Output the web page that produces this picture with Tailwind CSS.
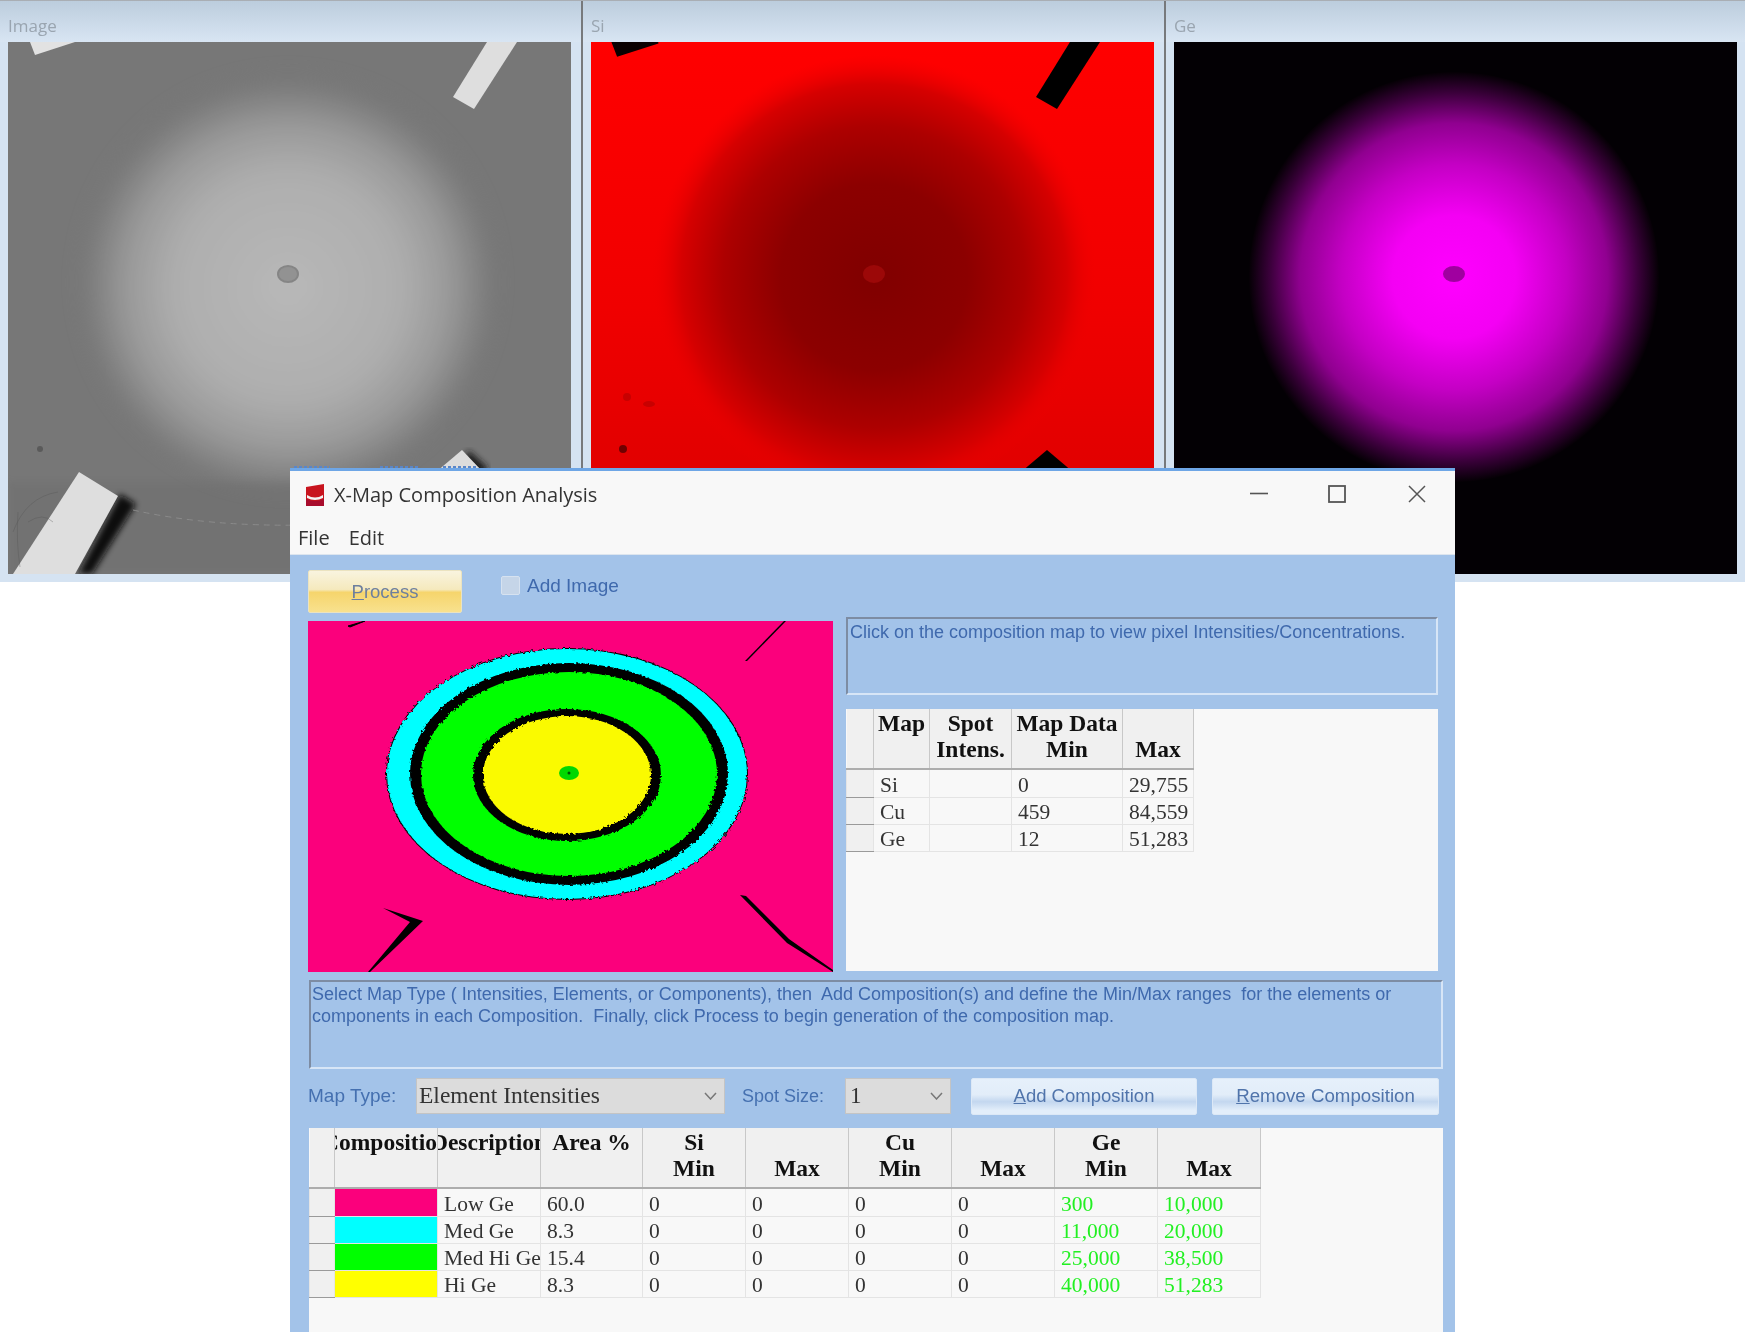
<!DOCTYPE html>
<html lang="en">
<head>
  <meta charset="UTF-8" />
  <title>X-Map Composition Analysis</title>
  <script src="https://cdn.jsdelivr.net/npm/@tailwindcss/browser@4"></script>
</head>
<body class="bg-white overflow-hidden">
  <div class="relative w-[1745px] h-[1332px] overflow-hidden blur-[0.6px]">

    <!-- Image panels behind the dialog -->
    <div class="flex w-[1749px] h-[582px] bg-[#d5e3f2] border-t border-[#a9aeb4]">
      <div class="w-[583px] shrink-0 border-r-2 border-[#77797c] flex flex-col">
        <div class="h-[41px] px-2 pt-[13px] bg-[linear-gradient(#bccddd,#d8e5f3)] text-[17px] leading-6 text-[#9aa5b0] font-['Open_Sans',sans-serif]">Image</div>
        <svg class="ml-2 block" width="563" height="532" viewBox="0 0 563 532">
          <defs>
            <radialGradient id="semBall" gradientUnits="userSpaceOnUse" cx="280" cy="245" r="205">
              <stop offset="0" stop-color="#b8b8b8"/>
              <stop offset="0.55" stop-color="#aeaeae"/>
              <stop offset="0.78" stop-color="#9a9a9a"/>
              <stop offset="0.92" stop-color="#848484"/>
              <stop offset="1" stop-color="#777777"/>
            </radialGradient>
            <filter id="semBlur"><feGaussianBlur stdDeviation="3"/></filter>
            <filter id="semSoft" x="-20%" y="-20%" width="140%" height="140%"><feGaussianBlur stdDeviation="10"/></filter>
          </defs>
          <rect width="563" height="532" fill="#777777"/>
          <circle cx="280" cy="240" r="205" fill="url(#semBall)" filter="url(#semSoft)"/>
          <rect y="440" width="563" height="92" fill="#6a6a6a" opacity="0.35" filter="url(#semBlur)"/>
          <polygon points="112,452 128,462 84,532 70,532" fill="#101010" filter="url(#semBlur)"/>
          <polygon points="460,408 480,426 472,436 455,426" fill="#1a1a1a" filter="url(#semBlur)"/>
          <polygon points="22,0 27,13 67,0" fill="#e2e2e2"/>
          <polygon points="479,0 445,55 466,67 509,0" fill="#dedede"/>
          <polygon points="71,430 110,454 67,532 5,532" fill="#dedede"/>
          <polygon points="454,408 428,430 475,430" fill="#dcdcdc"/>
          <ellipse cx="280" cy="232" rx="10" ry="8" fill="#929292" stroke="#858585" stroke-width="2"/>
          <path d="M125 468 Q200 485 300 483" fill="none" stroke="#8a8a8a" stroke-width="1" stroke-dasharray="6 5"/>
          <path d="M5 490 Q18 455 50 450 M10 470 Q8 500 12 525 M20 480 Q35 470 45 480" fill="none" stroke="#525252" stroke-width="1" opacity="0.35"/>
          <circle cx="32" cy="407" r="3" fill="#5a5a5a"/>
          <path d="M286 425 H322 M372 425 H410 M435 425 H470" stroke="#5a86c8" stroke-width="2" stroke-dasharray="3 2"/>
        </svg>
      </div>

      <div class="w-[583px] shrink-0 border-r-2 border-[#77797c] flex flex-col">
        <div class="h-[41px] px-2 pt-[13px] bg-[linear-gradient(#bccddd,#d8e5f3)] text-[17px] leading-6 text-[#9aa5b0] font-['Open_Sans',sans-serif]">Si</div>
        <svg class="ml-2 block" width="563" height="532" viewBox="0 0 563 532">
          <defs>
            <radialGradient id="siBall" gradientUnits="userSpaceOnUse" cx="283" cy="235" r="222">
              <stop offset="0" stop-color="#800000"/>
              <stop offset="0.42" stop-color="#8c0000"/>
              <stop offset="0.68" stop-color="#ad0000"/>
              <stop offset="0.87" stop-color="#d60000"/>
              <stop offset="1" stop-color="#ee0000" stop-opacity="0"/>
            </radialGradient>
            <linearGradient id="siFade" x1="0" y1="0" x2="0" y2="1">
              <stop offset="0" stop-color="#ff0000"/>
              <stop offset="0.5" stop-color="#f00000"/>
              <stop offset="1" stop-color="#d80000"/>
            </linearGradient>
          </defs>
          <rect width="563" height="532" fill="url(#siFade)"/>
          <circle cx="283" cy="235" r="222" fill="url(#siBall)"/>
          <polygon points="22,0 27,13 67,0" fill="#0a0000" stroke="#0a0000" stroke-width="3"/>
          <polygon points="479,0 445,55 466,67 509,0" fill="#000000"/>
          <polygon points="456,408 430,430 482,430" fill="#000000"/>
          <ellipse cx="283" cy="232" rx="11" ry="9" fill="#9c0808"/>
          <circle cx="32" cy="407" r="4" fill="#700000"/>
          <circle cx="36" cy="355" r="4" fill="#c80000"/>
          <ellipse cx="58" cy="362" rx="6" ry="3" fill="#c80000"/>
        </svg>
      </div>

      <div class="w-[583px] shrink-0 flex flex-col">
        <div class="h-[41px] px-2 pt-[13px] bg-[linear-gradient(#bccddd,#d8e5f3)] text-[17px] leading-6 text-[#9aa5b0] font-['Open_Sans',sans-serif]">Ge</div>
        <svg class="ml-2 block" width="563" height="532" viewBox="0 0 563 532">
          <defs>
            <radialGradient id="geBall" gradientUnits="userSpaceOnUse" cx="280" cy="235" r="205">
              <stop offset="0" stop-color="#ff00ff"/>
              <stop offset="0.3" stop-color="#f400f4"/>
              <stop offset="0.55" stop-color="#c400c4"/>
              <stop offset="0.75" stop-color="#900090"/>
              <stop offset="0.9" stop-color="#3a003a"/>
              <stop offset="1" stop-color="#050005"/>
            </radialGradient>
          </defs>
          <rect width="563" height="532" fill="#030004"/>
          <circle cx="280" cy="235" r="205" fill="url(#geBall)"/>
          <ellipse cx="280" cy="232" rx="11" ry="8" fill="#a000a0"/>
        </svg>
      </div>
    </div>

    <!-- Dialog window -->
    <div class="absolute left-[290px] top-[468px] w-[1165px] h-[864px] flex flex-col bg-[#f8f8f8] border-t-[3px] border-[#6ea6e6] overflow-hidden">
      <div class="h-[41px] shrink-0 flex items-center pl-[16px] pt-[6px] relative">
        <svg width="18" height="22" viewBox="0 0 18 22">
          <path d="M0 3 L18 0 V22 L0 22 Z" fill="#c8141e"/>
          <path d="M1 11 Q9 16 17 11 V14 Q9 18 1 14 Z" fill="#f4f4f4"/>
          <path d="M0 15 Q9 19 18 15 V22 H0 Z" fill="#a80c2c"/>
        </svg>
        <span class="ml-[10px] mt-[1px] text-[20px] leading-none text-[#333333] font-['Open_Sans',sans-serif]">X-Map Composition Analysis</span>
        <div class="absolute right-[29px] top-[14px] flex items-center">
          <svg width="18" height="18" viewBox="0 0 18 18"><path d="M0 8.5 H18" stroke="#555555" stroke-width="1.6"/></svg>
          <svg class="ml-[60px]" width="18" height="18" viewBox="0 0 18 18"><rect x="1" y="1" width="16" height="16" fill="none" stroke="#555555" stroke-width="1.8"/></svg>
          <svg class="ml-[62px]" width="18" height="18" viewBox="0 0 18 18"><path d="M1 1 L17 17 M17 1 L1 17" stroke="#555555" stroke-width="1.5"/></svg>
        </div>
      </div>
      <div class="h-[43px] shrink-0 flex items-center gap-[19px] pl-[8px] pt-[9px] text-[20px] text-[#333333] font-['Open_Sans',sans-serif] border-b border-[#dde5ee]">
        <span>File</span>
        <span>Edit</span>
      </div>

      <div class="flex-1 min-h-0 flex flex-col pl-[18px] pr-[13px] pt-[15px] bg-[#a3c3e9]">
        <div class="h-[43px] shrink-0 flex items-start font-['Liberation_Sans',sans-serif]">
          <button class="w-[154px] h-[43px] rounded-[2px] border border-[#ebe3c0] bg-[linear-gradient(#f9f4df_0%,#f5e9bd_45%,#f6d56c_52%,#f8e18e_100%)] text-[18.5px] text-[#6d7f9e]"><u>P</u>rocess</button>
          <span class="ml-[39px] mt-[6px] w-[19px] h-[19px] rounded-[2px] border border-[#d6e2f0] bg-[#c5d5e8]"></span>
          <span class="ml-[7px] mt-[2px] text-[19px] text-[#3f69ad]">Add Image</span>
        </div>

        <div class="flex mt-[8px] shrink-0">
          <svg class="shrink-0 block" width="525" height="351" viewBox="0 0 525 351">
            <defs>
              <filter id="rough" x="-5%" y="-5%" width="110%" height="110%">
                <feTurbulence type="fractalNoise" baseFrequency="0.35" numOctaves="2" seed="4"/>
                <feDisplacementMap in="SourceGraphic" scale="4"/>
              </filter>
            </defs>
            <rect width="525" height="351" fill="#fb007c"/>
            <g filter="url(#rough)">
              <ellipse cx="259" cy="153" rx="181" ry="126" fill="#000000"/>
              <ellipse cx="259" cy="153" rx="180" ry="125" fill="#00ffff"/>
              <ellipse cx="261" cy="153" rx="159" ry="111" fill="#000000"/>
              <ellipse cx="261" cy="153" rx="148" ry="102" fill="#00ff00"/>
              <ellipse cx="259" cy="154" rx="94" ry="66" fill="#000000"/>
              <ellipse cx="259" cy="154" rx="84" ry="59" fill="#fafa00"/>
            </g>
            <ellipse cx="261" cy="152" rx="10" ry="7" fill="#00d800"/>
            <circle cx="261" cy="152" r="1.5" fill="#005000"/>
            <polygon points="40,5 57,0 42,6" fill="#000000" stroke="#000000"/>
            <polygon points="478,0 476,0 437,40 439,40" fill="#000000"/>
            <polygon points="75,287 115,300 62,351 60,351 102,301" fill="#000000"/>
            <polygon points="432,274 438,275 481,318 525,349 525,351 479,322" fill="#000000"/>
          </svg>

          <div class="ml-[13px] w-[592px] -mt-[4px] flex flex-col">
            <div class="h-[78px] px-[2px] pt-[1px] border-2 border-t-[#7d8ca3] border-l-[#7d8ca3] border-b-[#d7e5f6] border-r-[#d7e5f6] font-['Liberation_Sans',sans-serif] text-[18px] leading-[24px] text-[#3f69ad] whitespace-nowrap">Click on the composition map to view pixel Intensities/Concentrations.</div>
            <div class="mt-[14px] h-[262px] bg-[#f8f8f8]">
              <table class="table-fixed w-[347px] border-collapse font-['Liberation_Serif',serif] text-[21.5px] text-[#333333] [&_th]:bg-[#f0f0f0] [&_th]:align-top [&_th]:pt-[2px] [&_th]:h-[60px] [&_th]:leading-[25.6px] [&_th]:text-[23.5px] [&_th]:text-[#111111] [&_th]:border-r [&_th]:border-b-2 [&_th]:border-r-[#c8c8c8] [&_th]:border-b-[#adadad] [&_td]:h-[27px] [&_tr:first-child_td]:h-[28px] [&_td]:p-0 [&_td]:pl-[6px] [&_td]:pt-[4px] [&_td]:leading-none [&_td]:border [&_td]:border-[#e4e4e4]">
                <colgroup><col class="w-[27px]"><col class="w-[56px]"><col class="w-[82px]"><col class="w-[111px]"><col class="w-[71px]"></colgroup>
                <thead>
                  <tr><th></th><th>Map<br>&nbsp;</th><th>Spot<br>Intens.</th><th>Map Data<br>Min</th><th>&nbsp;<br>Max</th></tr>
                </thead>
                <tbody class="[&_td:first-child]:bg-[#f0f0f0] [&_td:first-child]:border-b-[#9a9a9a]">
                  <tr><td></td><td>Si</td><td></td><td>0</td><td>29,755</td></tr>
                  <tr><td></td><td>Cu</td><td></td><td>459</td><td>84,559</td></tr>
                  <tr><td></td><td>Ge</td><td></td><td>12</td><td>51,283</td></tr>
                </tbody>
              </table>
            </div>
          </div>
        </div>

        <div class="mt-[8px] ml-[1px] w-[1134px] h-[89px] shrink-0 px-[1px] pt-[1px] border-2 border-t-[#7d8ca3] border-l-[#7d8ca3] border-b-[#d7e5f6] border-r-[#d7e5f6] font-['Liberation_Sans',sans-serif] text-[18px] leading-[22px] text-[#3f69ad] whitespace-pre">Select Map Type ( Intensities, Elements, or Components), then  Add Composition(s) and define the Min/Max ranges  for the elements or
components in each Composition.  Finally, click Process to begin generation of the composition map.</div>

        <div class="mt-[8px] h-[38px] shrink-0 flex items-center text-[18px] text-[#4570b0] font-['Liberation_Sans',sans-serif]">
          <span class="w-[108px] text-[19px]">Map Type:</span>
          <div class="w-[309px] h-[36px] flex items-center justify-between pl-[2px] pr-[7px] bg-[#dcdcdc] border border-[#c4c4c4] font-['Liberation_Serif',serif] text-[23.5px] text-[#333333]">
            <span>Element Intensities</span>
            <svg width="13" height="8" viewBox="0 0 13 8"><path d="M1 1 L6.5 7 L12 1" fill="none" stroke="#777777" stroke-width="1.5"/></svg>
          </div>
          <span class="ml-[17px] w-[103px]">Spot Size:</span>
          <div class="w-[106px] h-[36px] flex items-center justify-between pl-[4px] pr-[7px] bg-[#dcdcdc] border border-[#c4c4c4] font-['Liberation_Serif',serif] text-[23px] text-[#333333]">
            <span>1</span>
            <svg width="13" height="8" viewBox="0 0 13 8"><path d="M1 1 L6.5 7 L12 1" fill="none" stroke="#777777" stroke-width="1.5"/></svg>
          </div>
          <button class="ml-[20px] w-[226px] h-[37px] rounded-[2px] border border-[#dce8f6] bg-[linear-gradient(#e6f0fb_0%,#e2edf9_45%,#c3d7ef_65%,#e3eefa_90%)] text-[18.5px] text-[#5074ab]"><u>A</u>dd Composition</button>
          <button class="ml-[15px] w-[227px] h-[37px] rounded-[2px] border border-[#dce8f6] bg-[linear-gradient(#e6f0fb_0%,#e2edf9_45%,#c3d7ef_65%,#e3eefa_90%)] text-[18.7px] text-[#5074ab]"><u>R</u>emove Composition</button>
        </div>

        <div class="mt-[13px] ml-[1px] w-[1134px] flex-1 bg-[#f8f8f8]">
          <table class="table-fixed w-[951px] border-collapse font-['Liberation_Serif',serif] text-[21.5px] text-[#333333] [&_th]:bg-[#f0f0f0] [&_th]:align-top [&_th]:pt-[2px] [&_th]:h-[60px] [&_th]:leading-[25.6px] [&_th]:text-[23.5px] [&_th]:text-[#111111] [&_th]:overflow-hidden [&_th]:border-r [&_th]:border-b-2 [&_th]:border-r-[#c8c8c8] [&_th]:border-b-[#adadad] [&_td]:h-[27px] [&_tr:first-child_td]:h-[28px] [&_td]:p-0 [&_td]:pl-[6px] [&_td]:pt-[4px] [&_td]:leading-none [&_td]:border [&_td]:border-[#e4e4e4]">
            <colgroup><col class="w-[25px]"><col class="w-[103px]"><col class="w-[103px]"><col class="w-[102px]"><col class="w-[103px]"><col class="w-[103px]"><col class="w-[103px]"><col class="w-[103px]"><col class="w-[103px]"><col class="w-[103px]"></colgroup>
            <thead>
              <tr>
                <th></th>
                <th><div class="flex justify-center whitespace-nowrap">Composition</div></th>
                <th><div class="flex justify-center whitespace-nowrap">Description</div></th>
                <th>Area %</th>
                <th>Si<br>Min</th><th>&nbsp;<br>Max</th>
                <th>Cu<br>Min</th><th>&nbsp;<br>Max</th>
                <th>Ge<br>Min</th><th>&nbsp;<br>Max</th>
              </tr>
            </thead>
            <tbody class="[&_td:first-child]:bg-[#f0f0f0] [&_td:first-child]:border-b-[#9a9a9a]">
              <tr><td></td><td class="bg-[#fb007c]"></td><td>Low Ge</td><td>60.0</td><td>0</td><td>0</td><td>0</td><td>0</td><td class="text-[#22f022]">300</td><td class="text-[#22f022]">10,000</td></tr>
              <tr><td></td><td class="bg-[#00ffff]"></td><td>Med Ge</td><td>8.3</td><td>0</td><td>0</td><td>0</td><td>0</td><td class="text-[#22f022]">11,000</td><td class="text-[#22f022]">20,000</td></tr>
              <tr><td></td><td class="bg-[#00ff00]"></td><td class="whitespace-nowrap">Med Hi Ge</td><td>15.4</td><td>0</td><td>0</td><td>0</td><td>0</td><td class="text-[#22f022]">25,000</td><td class="text-[#22f022]">38,500</td></tr>
              <tr><td></td><td class="bg-[#ffff00]"></td><td>Hi Ge</td><td>8.3</td><td>0</td><td>0</td><td>0</td><td>0</td><td class="text-[#22f022]">40,000</td><td class="text-[#22f022]">51,283</td></tr>
            </tbody>
          </table>
        </div>
      </div>
    </div>
  </div>
</body>
</html>
